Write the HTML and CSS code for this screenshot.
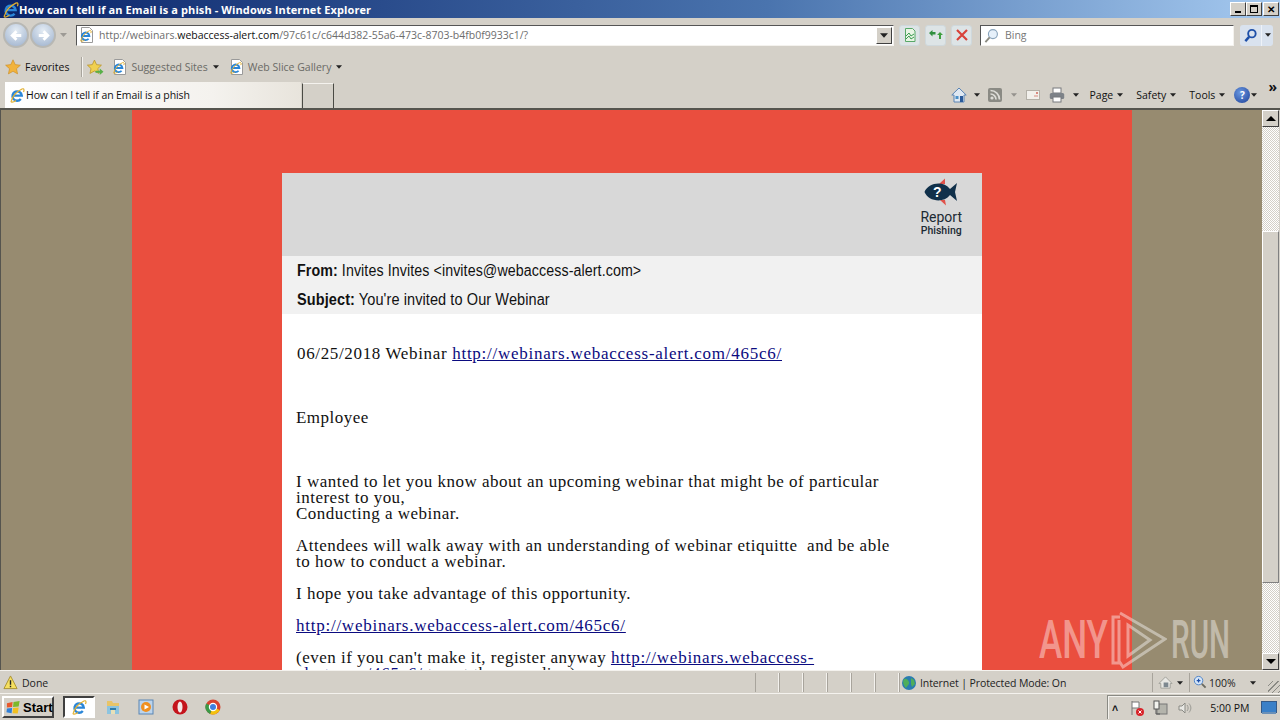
FILE: index.html
```html
<!DOCTYPE html>
<html lang="en">
<head>
    <meta charset="UTF-8">
    <title>How can I tell if an Email is a phish - Windows Internet Explorer</title>
    <link rel="stylesheet" href="styles.css">
</head>
<body>
    <svg class="defs" width="0" height="0">
        <symbol id="ie" viewBox="0 0 16 16">
            <path d="M3.600 8.600h9.200a4.700 4.700 0 1 0-1 3.400" fill="none" stroke="#2a86d8" stroke-width="2.300"/>
            <path d="M2.500 13.500C1 16 4 15.500 7 13.500M2.500 13.500C4 8 9 4 13 2c2-1 2.500 1 1.500 3" fill="none" stroke="#e2b030" stroke-width="1.200"/>
        </symbol>
        <symbol id="ie-page" viewBox="0 0 16 16">
            <path d="M2.500.5h8l3 3v12h-11z" fill="#fff" stroke="#9a9a9a"/>
            <use href="#ie" x="0" y="2" width="13" height="13"/>
        </symbol>
        <symbol id="caret" viewBox="0 0 7 4">
            <path d="M0 0h7L3.500 4z" fill="#222"/>
        </symbol>
    </svg>

    <div class="window">
        <!-- title bar -->
        <div class="titlebar">
            <svg class="title-icon"><use href="#ie"/></svg>
            <span class="title-text">How can I tell if an Email is a phish - Windows Internet Explorer</span>
            <span class="win-btn"><i class="glyph-min"></i></span>
            <span class="win-btn"><i class="glyph-restore"></i></span>
            <span class="win-btn win-close">&#x2715;</span>
        </div>

        <!-- back / forward, address, search -->
        <div class="navbar">
            <div class="nav-round">
                <svg viewBox="0 0 20 20"><path d="M15 10H6M10 5.500 5.500 10l4.500 4.500" fill="none" stroke="#fff" stroke-width="3"/></svg>
            </div>
            <div class="nav-round">
                <svg viewBox="0 0 20 20"><path d="M5 10h9M10 5.500l4.500 4.500-4.500 4.500" fill="none" stroke="#fff" stroke-width="3"/></svg>
            </div>
            <svg class="nav-caret"><use href="#caret"/></svg>
            <div class="address">
                <svg class="addr-icon"><use href="#ie-page"/></svg>
                <span class="url">http://webinars.<b>webaccess-alert.com</b>/97c61c/c644d382-55a6-473c-8703-b4fb0f9933c1/?</span>
                <span class="combo-btn"><svg><use href="#caret"/></svg></span>
            </div>
            <span class="nav-tool">
                <svg viewBox="0 0 16 16"><path d="M3.500 1.500h7l2.500 2.500v10.500h-9.500z" fill="#e8f5e4" stroke="#58a868"/><path d="M4 9l3-3 2 3 3-2M4 12l3-3 2 3 3-2" fill="none" stroke="#3a9a50"/></svg>
            </span>
            <span class="nav-tool">
                <svg viewBox="0 0 16 16"><path d="M1 6l3.500-3v2h3v2.500h-3v2z" fill="#2f8f3f"/><path d="M15 8l-3-3-3 3h2v4h2V8z" fill="#3f9f3f"/></svg>
            </span>
            <span class="nav-tool">
                <svg viewBox="0 0 16 16"><path d="M3 3l10 10M13 3 3 13" stroke="#d8423a" stroke-width="2.200"/></svg>
            </span>
            <div class="search">
                <svg viewBox="0 0 16 16"><circle cx="9.500" cy="6.500" r="4.800" fill="#e6f0fa" stroke="#8aa4bc" stroke-width="1.200"/><path d="M6 10 1.500 15" stroke="#8a8a80" stroke-width="2"/></svg>
                <span>Bing</span>
            </div>
            <div class="search-go">
                <span class="go-main"><svg viewBox="0 0 16 16"><circle cx="9.500" cy="6" r="4" fill="none" stroke="#1d4fa8" stroke-width="2"/><path d="M6.500 9.500 2.500 14" stroke="#1d4fa8" stroke-width="2.600"/></svg></span>
                <span class="go-drop"><svg><use href="#caret"/></svg></span>
            </div>
        </div>

        <!-- favorites bar -->
        <div class="favbar">
            <svg class="fav-star" viewBox="0 0 16 16"><path d="M8 .8l2.200 4.800 5.200.6-3.900 3.500 1.100 5.200L8 12.300l-4.600 2.600 1.100-5.200L.6 6.200l5.200-.6z" fill="#f2b33c" stroke="#c98a20" stroke-width=".6"/></svg>
            <span class="fav-label">Favorites</span>
            <span class="fav-sep"></span>
            <svg class="fav-add" viewBox="0 0 16 16"><path d="M7 1l2 4.300 4.600.5-3.400 3.200 1 4.600L7 11.300l-4.200 2.300 1-4.600L.4 5.800 5 5.300z" fill="#f0d050" stroke="#b89020" stroke-width=".7"/><path d="M8 11h4V9l3.500 3-3.500 3v-2H8z" fill="#58b048"/></svg>
            <div class="fav-item">
                <svg><use href="#ie-page"/></svg>
                <span>Suggested Sites</span>
                <svg class="caret"><use href="#caret"/></svg>
            </div>
            <div class="fav-item">
                <svg><use href="#ie-page"/></svg>
                <span>Web Slice Gallery</span>
                <svg class="caret"><use href="#caret"/></svg>
            </div>
        </div>

        <!-- tabs and command bar -->
        <div class="tabbar">
            <div class="tab">
                <svg><use href="#ie"/></svg>
                <span>How can I tell if an Email is a phish</span>
            </div>
            <div class="tab-new"></div>
            <div class="commands">
                <svg class="cmd-icon" viewBox="0 0 16 16"><path d="M8 1 .8 8H3v7h10V8h2.200z" fill="#dfe8f2" stroke="#5a84b4"/><rect x="9" y="9" width="3" height="6" fill="#2a5a9a"/><rect x="4.500" y="9" width="3" height="3" fill="#4a90c8"/></svg>
                <svg class="caret gap-home"><use href="#caret"/></svg>
                <svg class="cmd-icon" viewBox="0 0 16 16"><rect x="1" y="1" width="14" height="14" rx="2" fill="#8a8a84"/><circle cx="5" cy="11" r="1.600" fill="#dcdcd8"/><path d="M3.500 7a5.500 5.500 0 0 1 5.500 5.500M3.500 3.500a9 9 0 0 1 9 9" fill="none" stroke="#dcdcd8" stroke-width="1.700"/></svg>
                <svg class="caret caret-faint gap-cmd"><use href="#caret"/></svg>
                <svg class="cmd-icon" viewBox="0 0 16 16"><rect x="1.500" y="3.500" width="13" height="9" fill="#f2f0ec" stroke="#b4b0a8"/><path d="M9 9h4" stroke="#d88a80"/><path d="M11 5h2v2h-2z" fill="#d88a80"/></svg>
                <svg class="cmd-icon print" viewBox="0 0 16 16"><rect x="4" y="1" width="8" height="5" fill="#fff" stroke="#77797d"/><rect x=".8" y="6" width="14.400" height="6" rx="1.500" fill="#7d8288"/><rect x="4" y="10" width="8" height="5" fill="#fff" stroke="#77797d"/></svg>
                <svg class="caret gap-print"><use href="#caret"/></svg>
                <span class="cmd-text">Page</span><svg class="caret gap-text"><use href="#caret"/></svg>
                <span class="cmd-text">Safety</span><svg class="caret gap-text"><use href="#caret"/></svg>
                <span class="cmd-text">Tools</span><svg class="caret gap-last"><use href="#caret"/></svg>
                <span class="help">?</span><svg class="caret"><use href="#caret"/></svg>
                <span class="chevron">&raquo;</span>
            </div>
        </div>

        <!-- page area -->
        <div class="viewport">
            <div class="page">
                <div class="banner">
                    <div class="card">
                        <div class="card-head">
                            <div class="report">
                                <svg class="fish" viewBox="0 0 34 28">
                                    <path d="M15 6 21 .5 21 6zM16 22l6 5.500-1-5.500z" fill="#e0524a"/>
                                    <path d="M.5 14C4 5 19 2 26 11l7-6-2 9 2 9-7-6C19 26 4 23 .5 14z" fill="#10304a"/>
                                    <text x="9" y="19" class="fish-mark">?</text>
                                </svg>
                                <span class="report-big">Report</span>
                                <span class="report-small">Phishing</span>
                            </div>
                        </div>
                        <div class="card-meta">
                            <p class="meta-from"><b>From:</b> Invites Invites &lt;invites@webaccess-alert.com&gt;</p>
                            <p class="meta-subject"><b>Subject:</b> You're invited to Our Webinar</p>
                        </div>
                        <div class="card-body">
                            <p class="first">06/25/2018 Webinar <a href="#">http://webinars.webaccess-alert.com/465c6/</a></p>
                            <p class="spaced">Employee</p>
                            <p>I wanted to let you know about an upcoming webinar that might be of particular interest to you,<br>Conducting a webinar.</p>
                            <p>Attendees will walk away with an understanding of webinar etiquitte &nbsp;and be able to how to conduct a webinar.</p>
                            <p>I hope you take advantage of this opportunity.</p>
                            <p><a href="#">http://webinars.webaccess-alert.com/465c6/</a></p>
                            <p>(even if you can't make it, register anyway <a href="#">http://webinars.webaccess-alert.com/465c6/</a> to get the recording)</p>
                        </div>
                    </div>
                </div>
                <div class="watermark">
                    <span class="wm-any">ANY</span>
                    <svg viewBox="0 0 56 60"><path d="M9 7H2v46h7M9 3l45 26L12 57 8 51V10M17 15v31l22-16z" fill="none" stroke="#fff" stroke-width="3"/></svg>
                    <span class="wm-run">RUN</span>
                </div>
            </div>
            <div class="scrollbar">
                <span class="sb-btn"><i class="arrow-up"></i></span>
                <div class="sb-track"><span class="sb-thumb"></span></div>
                <span class="sb-btn"><i class="arrow-down"></i></span>
            </div>
        </div>

        <!-- status bar -->
        <div class="statusbar">
            <svg class="warn" viewBox="0 0 16 16"><path d="M8 1l7 13.500H1z" fill="#f6e060" stroke="#a89030"/><path d="M8 5.500v5M8 11.500v1.500" stroke="#222" stroke-width="1.500"/></svg>
            <span class="status-done">Done</span>
            <span class="cell"></span><span class="cell"></span><span class="cell"></span><span class="cell"></span><span class="cell"></span><span class="cell"></span>
            <div class="zone">
                <svg viewBox="0 0 16 16"><circle cx="8" cy="8" r="7" fill="#2a7cb0"/><path d="M3 4c3-1 4 1 5 3s-2 4-3 6C3 11 1 7 3 4zM10 3l3 2 1 4-3 3-1-3z" fill="#4fae5a"/></svg>
                <span>Internet | Protected Mode: On</span>
            </div>
            <div class="status-tool">
                <svg viewBox="0 0 16 16"><path d="M8 2 1 9h2v5h10V9h2z" fill="#e8e8e4" stroke="#a0a09a"/><rect x="6" y="8" width="5" height="5" fill="#7d8890"/></svg>
                <svg class="caret"><use href="#caret"/></svg>
            </div>
            <div class="status-zoom">
                <svg viewBox="0 0 16 16"><circle cx="7" cy="6" r="4.500" fill="#d6e6f8" stroke="#4a80c8"/><path d="M5 6h4M7 4v4" stroke="#1d4fa8" stroke-width="1.300"/><path d="M10.500 9.500l4 4" stroke="#6a6a60" stroke-width="2"/></svg>
                <span>100%</span>
                <svg class="caret"><use href="#caret"/></svg>
            </div>
            <span class="grip"></span>
        </div>

        <!-- taskbar -->
        <div class="taskbar">
            <button class="start">
                <svg viewBox="0 0 16 16"><path d="M1 3.500 7 2l-.5 5.500L1 8z" fill="#e8582c"/><path d="M8 2l6.500-1-1 6-6 .5z" fill="#7cb82c"/><path d="M1 9l5.500-.5L6 14l-5.500-1z" fill="#2f7fd8"/><path d="M7.500 8.500l6-.5-1 6.500L7 14z" fill="#f2c020"/></svg>
                Start
            </button>
            <span class="task task-on"><svg><use href="#ie"/></svg></span>
            <span class="task">
                <svg viewBox="0 0 16 16"><path d="M2 2h5l1 2h6v10H2z" fill="#e8c468"/><rect x="2" y="7" width="12" height="8" fill="#8cc4e0"/><rect x="5" y="9" width="6" height="2" fill="#2f7ca8"/><rect x="6" y="11" width="4" height="4" fill="#e8e0b8"/></svg>
            </span>
            <span class="task">
                <svg viewBox="0 0 16 16"><rect x="1" y="1" width="14" height="14" fill="#bcd4ec" stroke="#5a86b4"/><circle cx="8" cy="8" r="5" fill="#f09020"/><path d="M6.500 5.500 11 8l-4.500 2.500z" fill="#fff"/></svg>
            </span>
            <span class="task">
                <svg viewBox="0 0 16 16"><circle cx="8" cy="8" r="7.500" fill="#c4141c"/><ellipse cx="8" cy="8" rx="2.500" ry="5.500" fill="#f4e8e8"/></svg>
            </span>
            <span class="task">
                <svg viewBox="0 0 16 16"><circle cx="8" cy="8" r="7.500" fill="#d8432f"/><path d="M8 8 14.800 11A7.500 7.500 0 0 1 5 15z" fill="#f4c20d"/><path d="M8 8 5 15A7.500 7.500 0 0 1 1.200 4.500z" fill="#3a9a48"/><circle cx="8" cy="8" r="3.600" fill="#3f7fe0" stroke="#fff" stroke-width="1.200"/></svg>
            </span>
            <div class="tray">
                <span class="tray-up">&#x2C4;</span>
                <svg viewBox="0 0 16 16"><path d="M3 1v14M3 2h7v6H3" fill="#fff" stroke="#777"/><circle cx="11" cy="12" r="4" fill="#d8232a"/><path d="M9.500 10.500l3 3M12.500 10.500l-3 3" stroke="#fff"/></svg>
                <svg viewBox="0 0 16 16"><rect x="5" y="4" width="10" height="10" fill="#b4b4ac" stroke="#777"/><rect x="2" y="1" width="5" height="8" fill="#f2f2ee" stroke="#555"/><path d="M4 9v5h4" fill="none" stroke="#555"/></svg>
                <svg class="tray-sound" viewBox="0 0 16 16"><path d="M2 6h3l3-3v10l-3-3H2z" fill="#e8e8e4" stroke="#8a8a84"/><path d="M10 5c1.500 2 1.500 4 0 6M12 3.500c2.500 3 2.500 6 0 9" fill="none" stroke="#9a9a94"/></svg>
                <span class="clock">5:00 PM</span>
                <svg class="show-desktop" viewBox="0 0 16 14"><rect x=".5" y=".5" width="15" height="11" fill="#3a80c8" stroke="#345a88"/><rect x="1" y="11" width="14" height="2" fill="#6a90b8"/></svg>
            </div>
        </div>
    </div>
</body>
</html>
```

FILE: styles.css
```css
* {
    box-sizing: border-box;
}

html,
body {
    margin: 0;
    height: 100%;
    overflow: hidden;
}

body {
    font-family: "Liberation Sans", Arial, sans-serif;
    font-size: 12px;
    color: #222;
    background-color: #d4d0c8;
}

.defs {
    display: block;
    height: 0;
}

.window {
    display: flex;
    flex-direction: column;
    width: 1280px;
    height: 720px;
}

.caret {
    width: 6px;
    height: 4px;
    flex: none;
}

/* Title bar */
.titlebar {
    display: flex;
    align-items: center;
    height: 18px;
    padding-left: 2px;
    padding-right: 1px;
    background: linear-gradient(90deg, #0a246a 0, #4a74ae 60%, #a6caf0 100%);
    flex: none;
}

.title-icon {
    width: 17px;
    height: 17px;
    flex: none;
}

.title-text {
    flex: 1;
    color: #fff;
    font-family: "Open Sans", sans-serif;
    font-weight: bold;
    font-size: 11px;
    letter-spacing: 0.1px;
    white-space: nowrap;
}

.win-btn {
    display: flex;
    align-items: center;
    justify-content: center;
    width: 16px;
    height: 14px;
    background-color: #d4d0c8;
    border: 1px solid;
    border-color: #fff #404040 #404040 #fff;
    font-size: 10px;
    font-weight: bold;
    color: #000;
}

.glyph-min {
    width: 6px;
    height: 2px;
    margin-top: 6px;
    background-color: #000;
}

.glyph-restore {
    width: 8px;
    height: 8px;
    border: 1px solid #000;
    border-top-width: 2px;
}

.win-close {
    margin-left: 1px;
}

/* Navigation bar */
.navbar {
    display: flex;
    align-items: center;
    height: 34px;
    padding-left: 3px;
    flex: none;
}

.nav-round {
    display: flex;
    align-items: center;
    justify-content: center;
    width: 26px;
    height: 26px;
    border-radius: 50%;
    border: 2px solid #b8b8b4;
    background: radial-gradient(circle at 50% 30%, #e4ecf4, #9cb0cc);
    margin-right: 1px;
    flex: none;
}

.nav-round svg {
    width: 19px;
    height: 19px;
}

.nav-caret {
    width: 7px;
    height: 4px;
    margin-left: 3px;
    opacity: 0.3;
    flex: none;
}

.address {
    display: flex;
    align-items: center;
    width: 818px;
    height: 21px;
    margin-left: 9px;
    background-color: #fff;
    border: 1px solid;
    border-color: #555 #f4f2ee #f4f2ee #555;
    flex: none;
}

.addr-icon {
    width: 16px;
    height: 16px;
    margin: 0 4px 0 2px;
    flex: none;
}

.url {
    flex: 1;
    color: #6d6d6d;
    font-family: "Open Sans", sans-serif;
    font-size: 10.5px;
    white-space: nowrap;
}

.url b {
    color: #111;
    font-weight: normal;
}

.combo-btn {
    display: flex;
    align-items: center;
    justify-content: center;
    width: 16px;
    height: 17px;
    margin-right: 1px;
    background-color: #d4d0c8;
    border: 1px solid;
    border-color: #fff #404040 #404040 #fff;
}

.combo-btn svg {
    width: 8px;
    height: 5px;
}

.nav-tool {
    display: flex;
    align-items: center;
    justify-content: center;
    width: 21px;
    height: 21px;
    margin-left: 5px;
    background-color: #dde4e6;
    border: 1px solid #cfd8dc;
    border-radius: 3px;
    flex: none;
}

.nav-tool svg {
    width: 16px;
    height: 16px;
}

.search {
    display: flex;
    align-items: center;
    gap: 6px;
    width: 254px;
    height: 21px;
    margin-left: 8px;
    padding-left: 3px;
    background-color: #fff;
    border: 1px solid;
    border-color: #555 #f4f2ee #f4f2ee #555;
    color: #777;
    font-family: "Open Sans", sans-serif;
    font-size: 10.5px;
    flex: none;
}

.search svg {
    width: 15px;
    height: 15px;
}

.search-go {
    display: flex;
    height: 21px;
    margin-left: 6px;
    border-radius: 3px;
    background-color: #d9e2ee;
    flex: none;
}

.go-main {
    display: flex;
    align-items: center;
    justify-content: center;
    width: 22px;
    border-right: 1px solid #eef2f8;
}

.go-main svg {
    width: 15px;
    height: 15px;
}

.go-drop {
    display: flex;
    align-items: center;
    justify-content: center;
    width: 11px;
}

.go-drop svg {
    width: 6px;
    height: 4px;
}

/* Favorites bar */
.favbar {
    display: flex;
    align-items: center;
    height: 30px;
    padding-left: 5px;
    flex: none;
}

.fav-star {
    width: 16px;
    height: 16px;
    flex: none;
}

.fav-label {
    margin-left: 4px;
    font-family: "Open Sans", sans-serif;
    font-size: 10.5px;
    color: #111;
}

.fav-sep {
    width: 1px;
    height: 20px;
    margin-left: 12px;
    background-color: #a8a49c;
    box-shadow: 1px 0 0 #f4f2ee;
}

.fav-add {
    width: 17px;
    height: 17px;
    margin-left: 5px;
    flex: none;
}

.fav-item {
    display: flex;
    align-items: center;
    gap: 3px;
    margin-left: 8px;
    color: #6a6a66;
    font-family: "Open Sans", sans-serif;
    font-size: 10.5px;
}

.fav-item > svg:first-child {
    width: 16px;
    height: 16px;
}

.fav-item + .fav-item {
    margin-left: 10px;
}

.fav-item .caret {
    margin-left: 2px;
}

/* Tabs and command bar */
.tabbar {
    display: flex;
    align-items: flex-end;
    height: 28px;
    padding-left: 5px;
    border-bottom: 2px solid #55544e;
    flex: none;
}

.tab {
    display: flex;
    align-items: center;
    gap: 1px;
    width: 296px;
    height: 26px;
    padding-left: 4px;
    background: linear-gradient(90deg, #fff, #f4f2ee 70%, #e8e4dc);
    font-family: "Open Sans", sans-serif;
    font-size: 10.5px;
    letter-spacing: -0.1px;
    color: #111;
}

.tab svg {
    width: 16px;
    height: 16px;
    flex: none;
}

.tab-new {
    width: 32px;
    height: 25px;
    margin-left: 1px;
    border: 1px solid #4a4a44;
    border-bottom: none;
    border-top-color: #f4f2ee;
    background-color: #d4d0c8;
    box-shadow: inset 2px 0 0 #d4d0c8;
}

.commands {
    display: flex;
    align-items: center;
    flex: 1;
    height: 26px;
    justify-content: flex-end;
    padding-right: 3px;
    font-family: "Open Sans", sans-serif;
    font-size: 10.5px;
    color: #111;
}

.cmd-icon {
    width: 16px;
    height: 16px;
    flex: none;
}

.print {
    margin-left: 8px;
}

.gap-home {
    margin: 0 7px;
}

.gap-cmd {
    margin: 0 8px;
}

.gap-print {
    margin: 0 11px 0 8px;
}

.caret-faint {
    opacity: 0.35;
}

.gap-text {
    margin: 0 13px 0 4px;
}

.gap-last {
    margin: 0 9px 0 4px;
}

.cmd-text {
    white-space: nowrap;
}

.help {
    display: flex;
    align-items: center;
    justify-content: center;
    width: 16px;
    height: 16px;
    margin-right: 1px;
    border-radius: 50%;
    background: radial-gradient(circle at 40% 35%, #6a98e0, #1c3f98);
    color: #fff;
    font-weight: bold;
    font-size: 10px;
}

.chevron {
    align-self: flex-start;
    margin-left: 11px;
    margin-top: -2px;
    font-size: 14px;
    font-weight: bold;
    line-height: 14px;
}

/* Page area */
.viewport {
    display: flex;
    height: 560px;
    overflow: hidden;
    border-left: 1px solid #55544e;
    flex: none;
}

.page {
    position: relative;
    flex: 1;
    overflow: hidden;
    background-color: #978b70;
}

.banner {
    width: 1000px;
    height: 100%;
    margin-left: 131px;
    padding-top: 63px;
    background-color: #ea4e3e;
}

.card {
    width: 700px;
    height: 600px;
    margin: 0 auto;
    background-color: #fff;
}

.card-head {
    display: flex;
    justify-content: flex-end;
    height: 83px;
    padding: 5px 20px 0 0;
    background-color: #d8d8d8;
}

.report {
    display: flex;
    flex-direction: column;
    align-items: center;
}

.fish {
    width: 34px;
    height: 28px;
}

.fish-mark {
    font-family: "Liberation Sans", sans-serif;
    font-weight: bold;
    font-size: 14px;
    fill: #fff;
}

.report-big {
    margin-top: 3px;
    font-family: "Roboto", sans-serif;
    font-size: 14px;
    line-height: 16px;
    color: #1c2a33;
}

.report-small {
    font-family: "Roboto", sans-serif;
    font-weight: 500;
    font-size: 10.5px;
    line-height: 12px;
    color: #1c2a33;
}

.card-meta {
    height: 58px;
    padding: 7px 15px 0;
    background-color: #f1f1f1;
    color: #111;
    font-family: "Liberation Sans", sans-serif;
    font-size: 16px;
}

.card-meta p {
    margin: 0 0 13px;
    line-height: 16px;
    letter-spacing: 0.1px;
    white-space: nowrap;
    transform-origin: left center;
}

.meta-from {
    transform: scaleX(0.89);
}

.meta-subject {
    transform: scaleX(0.907);
}

.card-body {
    padding: 32px 90px 0 14px;
    font-family: "Liberation Serif", serif;
    font-size: 17px;
    line-height: 16px;
    color: #111;
    letter-spacing: 0.49px;
}

.card-body p {
    margin: 0 0 16px;
}

.card-body .first {
    margin-left: 1px;
    margin-bottom: 48px;
    letter-spacing: 0.65px;
}

.card-body .spaced {
    margin-bottom: 48px;
}

.card-body a {
    color: #0b0b80;
    letter-spacing: 0.75px;
}

.watermark {
    position: absolute;
    left: 1038px;
    top: 500px;
    display: flex;
    align-items: center;
    gap: 4px;
    height: 60px;
    color: rgba(255, 255, 255, 0.42);
    font-family: "Roboto", sans-serif;
    font-weight: 500;
    font-size: 53px;
    line-height: 60px;
}

.watermark span {
    display: inline-block;
    width: 68px;
    transform-origin: left center;
}

.wm-any {
    transform: scaleX(0.66);
}

.wm-run {
    transform: scaleX(0.56);
}

.watermark svg {
    width: 56px;
    height: 60px;
    opacity: 0.42;
    flex: none;
}

/* Scrollbar */
.scrollbar {
    display: flex;
    flex-direction: column;
    width: 17px;
    margin-right: 1px;
    flex: none;
}

.sb-btn {
    display: flex;
    align-items: center;
    justify-content: center;
    height: 17px;
    background-color: #d4d0c8;
    border: 1px solid;
    border-color: #fff #404040 #404040 #fff;
    flex: none;
}

.arrow-up,
.arrow-down {
    width: 0;
    height: 0;
    border-left: 5px solid transparent;
    border-right: 5px solid transparent;
}

.arrow-up {
    border-bottom: 5px solid #000;
}

.arrow-down {
    border-top: 5px solid #000;
}

.sb-track {
    flex: 1;
    padding-top: 104px;
    background-color: #ebe9e4;
    background-image: repeating-conic-gradient(#d4d0c8 0 25%, #fff 0 50%);
    background-size: 2px 2px;
}

.sb-thumb {
    display: block;
    height: 352px;
    background-color: #d4d0c8;
    border: 1px solid;
    border-color: #fff #808080 #808080 #fff;
}

/* Status bar */
.statusbar {
    display: flex;
    align-items: center;
    height: 24px;
    padding: 1px 0 0 3px;
    border-top: 1px solid #f4f2ee;
    border-bottom: 1px solid #f4f2ee;
    font-family: "Open Sans", sans-serif;
    font-size: 10.5px;
    color: #222;
    flex: none;
}

.warn {
    width: 15px;
    height: 15px;
    flex: none;
}

.status-done {
    width: 733px;
    margin-left: 4px;
}

.cell {
    width: 24px;
    height: 19px;
    border-left: 1px solid #a8a49c;
    border-right: 1px solid #f4f2ee;
}

.zone {
    display: flex;
    align-items: center;
    gap: 3px;
    width: 253px;
    height: 19px;
    padding-left: 1px;
    border-left: 1px solid #a8a49c;
    letter-spacing: -0.1px;
}

.zone svg {
    width: 16px;
    height: 16px;
}

.status-tool {
    display: flex;
    align-items: center;
    gap: 4px;
    width: 37px;
    height: 19px;
    padding-left: 5px;
    border-left: 1px solid #a8a49c;
}

.status-tool svg:first-child {
    width: 15px;
    height: 15px;
}

.status-zoom {
    display: flex;
    align-items: center;
    gap: 2px;
    width: 79px;
    height: 19px;
    padding-left: 2px;
    border-left: 1px solid #a8a49c;
}

.status-zoom svg:first-child {
    width: 15px;
    height: 15px;
}

.status-zoom .caret {
    margin-left: 12px;
}

.grip {
    width: 12px;
    height: 12px;
    align-self: flex-end;
    background: repeating-linear-gradient(135deg, #d4d0c8 0 3px, #8a8a84 3px 4px);
}

/* Taskbar */
.taskbar {
    display: flex;
    align-items: center;
    flex: 1;
    padding-left: 2px;
}

.start {
    display: flex;
    align-items: center;
    gap: 2px;
    width: 52px;
    height: 22px;
    padding: 0 2px;
    background-color: #d4d0c8;
    border: 2px solid;
    border-color: #fff #404040 #404040 #fff;
    font-family: "Liberation Sans", sans-serif;
    font-size: 13px;
    font-weight: bold;
    color: #000;
}

.start svg {
    width: 15px;
    height: 15px;
    flex: none;
}

.task {
    display: flex;
    align-items: center;
    justify-content: center;
    width: 33.500px;
    height: 22px;
    flex: none;
}

.task svg {
    width: 16px;
    height: 16px;
}

.task-on {
    width: 32px;
    margin-left: 9px;
    margin-right: 1px;
    background-color: #fff;
    border: 2px solid;
    border-color: #404040 #fff #fff #404040;
}

.tray {
    display: flex;
    align-items: center;
    gap: 7px;
    width: 173px;
    height: 24px;
    margin-left: auto;
    padding-left: 4px;
    border-left: 1px solid #8a8a84;
    border-top: 1px solid #8a8a84;
    box-shadow: inset 1px 1px 0 #f4f2ee;
    font-family: "Open Sans", sans-serif;
    font-size: 10.5px;
    color: #111;
}

.tray svg {
    width: 16px;
    height: 16px;
    flex: none;
}

.tray-up {
    margin-right: 4px;
    font-weight: bold;
}

.tray .tray-sound {
    margin-left: 2px;
}

.clock {
    margin-left: 10px;
    white-space: nowrap;
}

.tray .show-desktop {
    margin-left: 5px;
    width: 16px;
    height: 14px;
}
```
